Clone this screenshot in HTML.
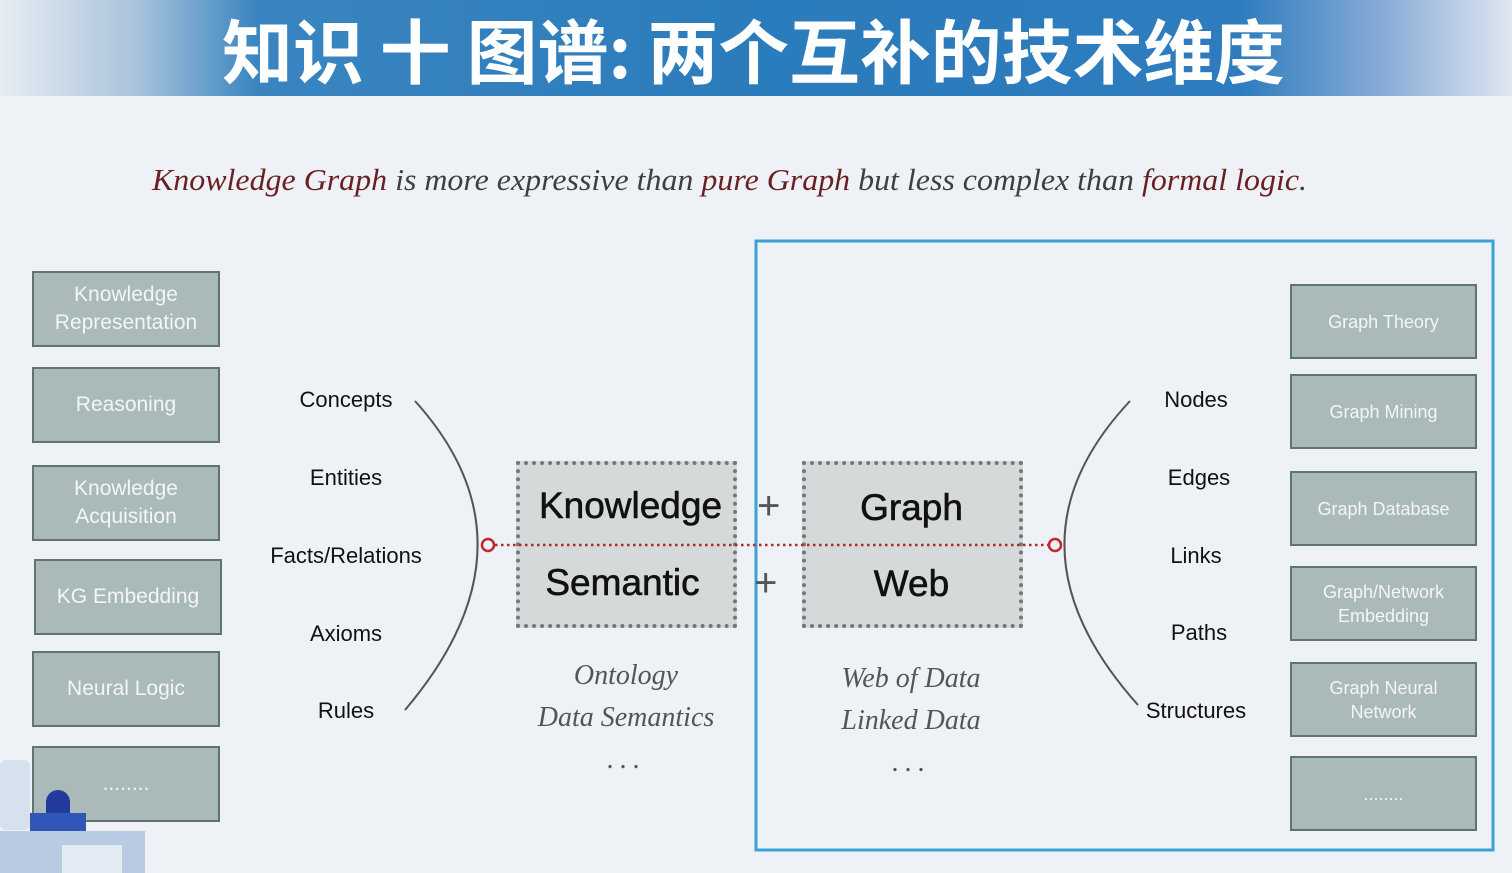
<!DOCTYPE html>
<html><head><meta charset="utf-8"><style>
body{margin:0;width:1512px;height:873px;overflow:hidden;background:#eef1f5;position:relative;font-family:"Liberation Sans","DejaVu Sans",sans-serif}
.hdr{position:absolute;left:0;top:0;width:1512px;height:96px;background:linear-gradient(90deg,#e8edf3 0%,#a9c3dc 9%,#3a85c0 17%,#2b7cbc 50%,#2e7cbe 82%,#8eaed8 92%,#dfe6f0 100%)}
.lb,.rb{position:absolute;background:#aab9ba;border:2px solid #5f7371;color:#f3f6f5;display:flex;align-items:center;justify-content:center;text-align:center;box-sizing:border-box}
.lb{width:188px;height:76px;font-size:21px;line-height:28px}
.rb{width:187px;height:75px;font-size:18px;line-height:24px}
.w{position:absolute;font-size:22px;color:#111;text-align:center}
.db{position:absolute;width:221px;height:167px;background:#d5d9da;border:4px dotted #757879;box-sizing:border-box}
.big{position:absolute;font-size:37px;color:#111;text-align:center;width:221px;-webkit-text-stroke:0.6px #111}
.it{position:absolute;font:italic 28px "Liberation Serif",serif;color:#555;text-align:center;width:260px;line-height:42px}
.plus{position:absolute;font-size:40px;color:#555;font-weight:300}
</style></head><body>
<div class="hdr"></div>
<svg style="position:absolute;left:0;top:0" width="1512" height="873">
<text x="222" y="78" font-family="Noto Sans CJK SC" font-weight="bold" font-size="70" fill="#fff" textLength="1063" lengthAdjust="spacingAndGlyphs">知识 十 图谱: 两个互补的技术维度</text>
<text x="152" y="190" font-family="Liberation Serif" font-style="italic" font-size="31" fill="#3d3f44" textLength="1155" lengthAdjust="spacingAndGlyphs"><tspan fill="#6a1f22">Knowledge Graph</tspan> is more expressive than <tspan fill="#6a1f22">pure Graph</tspan> but less complex than <tspan fill="#6a1f22">formal logic</tspan>.</text>
<rect x="756" y="241" width="737" height="609" fill="none" stroke="#3aa3d6" stroke-width="3"/>
<path d="M415 401 Q545 545 405 710" fill="none" stroke="#555" stroke-width="2"/>
<path d="M1130 401 Q995 545 1138 705" fill="none" stroke="#555" stroke-width="2"/>
</svg>
<div class="lb" style="left:32px;top:271px">Knowledge<br>Representation</div>
<div class="lb" style="left:32px;top:367px">Reasoning</div>
<div class="lb" style="left:32px;top:465px">Knowledge<br>Acquisition</div>
<div class="lb" style="left:34px;top:559px">KG Embedding</div>
<div class="lb" style="left:32px;top:651px">Neural Logic</div>
<div class="lb" style="left:32px;top:746px">........</div>
<div class="rb" style="left:1290px;top:284px">Graph Theory</div>
<div class="rb" style="left:1290px;top:374px">Graph Mining</div>
<div class="rb" style="left:1290px;top:471px">Graph Database</div>
<div class="rb" style="left:1290px;top:566px">Graph/Network<br>Embedding</div>
<div class="rb" style="left:1290px;top:662px">Graph Neural<br>Network</div>
<div class="rb" style="left:1290px;top:756px">........</div>
<div class="w" style="left:246px;top:387px;width:200px">Concepts</div>
<div class="w" style="left:246px;top:465px;width:200px">Entities</div>
<div class="w" style="left:246px;top:543px;width:200px">Facts/Relations</div>
<div class="w" style="left:246px;top:621px;width:200px">Axioms</div>
<div class="w" style="left:246px;top:698px;width:200px">Rules</div>
<div class="w" style="left:1096px;top:387px;width:200px">Nodes</div>
<div class="w" style="left:1099px;top:465px;width:200px">Edges</div>
<div class="w" style="left:1096px;top:543px;width:200px">Links</div>
<div class="w" style="left:1099px;top:620px;width:200px">Paths</div>
<div class="w" style="left:1096px;top:698px;width:200px">Structures</div>
<div class="db" style="left:516px;top:461px"></div>
<div class="db" style="left:802px;top:461px"></div>
<div class="big" style="left:520px;top:485px">Knowledge</div>
<div class="big" style="left:512px;top:562px">Semantic</div>
<div class="big" style="left:801px;top:487px">Graph</div>
<div class="big" style="left:801px;top:563px">Web</div>
<div class="plus" style="left:757px;top:484px">+</div>
<div class="plus" style="left:754px;top:561px">+</div>
<svg style="position:absolute;left:0;top:0" width="1512" height="873">
<line x1="495" y1="545" x2="1048" y2="545" stroke="#b3262a" stroke-width="2.5" stroke-dasharray="2.5 3.5"/>
<circle cx="488" cy="545" r="6" fill="#eef1f5" stroke="#c0282c" stroke-width="2.5"/>
<circle cx="1055" cy="545" r="6" fill="#eef1f5" stroke="#c0282c" stroke-width="2.5"/>
</svg>
<div class="it" style="left:496px;top:655px">Ontology<br>Data Semantics<br><span style="font-style:normal;letter-spacing:6px">...</span></div>
<div class="it" style="left:781px;top:658px">Web of Data<br>Linked Data<br><span style="font-style:normal;letter-spacing:6px">...</span></div>
<div style="position:absolute;left:0;top:760px;width:30px;height:70px;background:#d7e1ee;border-radius:6px"></div>
<div style="position:absolute;left:46px;top:790px;width:24px;height:30px;background:#23399c;border-radius:12px 12px 0 0"></div>
<div style="position:absolute;left:30px;top:813px;width:56px;height:18px;background:#3056b8"></div>
<div style="position:absolute;left:0;top:831px;width:145px;height:42px;background:#b8cbe3"></div>
<div style="position:absolute;left:62px;top:845px;width:60px;height:28px;background:#e3ebf5"></div>
</body></html>
